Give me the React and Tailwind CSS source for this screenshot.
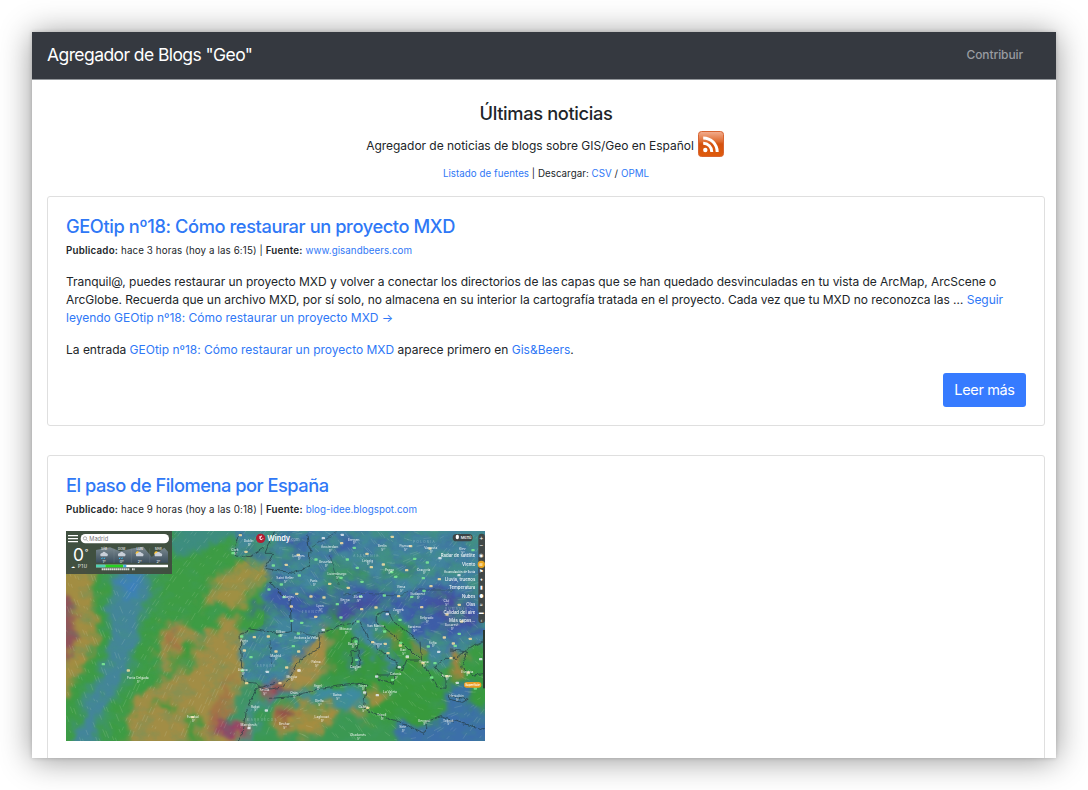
import React from "react";

const link = "text-[#2f78f6]";

// Map geometry uses a 3x grid: viewBox is 1257 x 630 for a 419 x 210 picture.
const yellowMarks = [
  [541, 31], [558, 81], [583, 337], [625, 335], [553, 377], [205, 437], [560, 475], [398, 577], [997, 36], [845, 55], [921, 87], [934, 127], [809, 177], [865, 189], [1052, 64], [1110, 71], [1040, 136], [970, 119], [1113, 184], [1138, 163], [1085, 247], [710, 207], [753, 215], [792, 218], [694, 245], [767, 276], [716, 380], [648, 380], [680, 428], [717, 437], [905, 253], [948, 248], [938, 352], [984, 385], [976, 357], [1021, 362], [1042, 397], [1089, 415], [1153, 338], [1173, 400], [1225, 443], [1161, 454], [679, 120], [923, 549], [1180, 356], [1231, 342], [1198, 240], [1205, 290], [715, 90], [1161, 269], [660, 475], [1016, 214],
];
const greenMarks = [
  [130, 418], [519, 85], [545, 335], [547, 437], [573, 397], [627, 194], [640, 122], [883, 69], [862, 104], [892, 129], [843, 159], [906, 171], [768, 104], [995, 142], [1007, 156], [1064, 102], [1102, 113], [1090, 160], [718, 152], [664, 179], [695, 288], [725, 294], [832, 238], [902, 215], [973, 212], [1055, 216], [1092, 198], [843, 278], [894, 290], [974, 320], [715, 326], [700, 364], [888, 350], [890, 405], [998, 465], [1115, 458], [1022, 354], [1105, 365], [1125, 415], [1186, 363], [1020, 285], [1198, 327], [660, 332], [1239, 76], [1246, 491], [672, 217],
];
const whiteMarks = [
  [622, 441], [619, 557], [567, 610], [847, 30], [1140, 100], [1197, 151], [950, 455], [1192, 474], [914, 503], [952, 511], [1136, 381], [982, 268], [717, 437], [1018, 427], [790, 315], [1262, 403], [790, 40], [1042, 395],
];
const cities = [
  [525, 78, "Cork"], [566, 52, "Dublín"], [233, 463, "Ponta Delgada"], [398, 580, "Funchal"], [552, 350, "Porto"], [586, 548, "Rabat"], [566, 602, "Marrakech"], [548, 438, "Lisboa"], [613, 499, "Sevilla"], [881, 47, "Bremen"], [809, 69, "Ámsterdam"], [716, 95, "Londres"], [797, 115, "Bruselas"], [831, 150, "Luxemburgo"], [675, 162, "Saint Helier"], [967, 66, "Berlín"], [923, 110, "Leipzig"], [988, 137, "Praga"], [1035, 66, "Poznan"], [1112, 73, "Varsovia"], [1091, 137, "Cracovia"], [1023, 190, "Viena"], [1073, 210, "Budapest"], [895, 220, "Zürich"], [855, 227, "Berna"], [686, 218, "Nantes"], [780, 247, "Lyon"], [761, 171, "París"], [738, 343, "Andorra la Vella"], [662, 325, "Bilbao"], [857, 315, "Mónaco"], [947, 307, "San Marino"], [1015, 257, "Zagreb"], [1100, 283, "Belgrado"], [1063, 310, "Sarajevo"], [953, 359, "Roma"], [1118, 356, "Sofía"], [768, 415, "Palma"], [887, 428, "Cagliari"], [878, 359, "Bastia"], [1030, 378, "Bari"], [1091, 415, "Tirana"], [1007, 450, "Catania"], [1222, 443, "Esmirna"], [1190, 516, "Heraclión"], [1160, 455, "Atenas"], [695, 458, "Murcia"], [773, 485, "Argel"], [702, 508, "Orán"], [832, 513, "Batna"], [908, 485, "Túnez"], [990, 503, "La Valeta"], [778, 532, "Djelfa"], [785, 580, "Laghouat"], [673, 600, "Bechar"], [910, 550, "Gabès"], [965, 573, "Trípoli"], [1028, 610, "Sirte"], [1093, 590, "Bengasi"], [1165, 590, "Tobruk"], [894, 634, "Ghadamés"], [1207, 75, "Kiev"], [1159, 232, "Cluj"], [1175, 303, "Bucarest"], [647, 395, "Madrid"],
];
const layers = [
  [97, "Radar de satélite", "◉"], [123, "Viento", "≋"], [145, "Acumulación de lluvia", "⚑"], [167, "Lluvia, truenos", "♦"], [193, "Temperatura", "▮"], [219, "Nubes", "●"], [242, "Olas", "≈"], [266, "Calidad del aire", "▬"], [291, "Más capas...", "‹"],
];

// Short wind streaks, spread with a deterministic sequence.
const streaks = Array.from({ length: 1100 }, (_, i) => {
  const x = 18 + ((i * 0.6180339) % 1) * 1250;
  const y = 18 + ((i * 0.7548776) % 1) * 625;
  const a = x < 180 ? 1.2 : x < 640 ? -0.9 - y / 2200 : Math.sin(x / 120 + y / 90);
  const l = 8 + (i % 5) * 4;
  return `M${x.toFixed(0)} ${y.toFixed(0)}l${(Math.cos(a) * l).toFixed(0)} ${(Math.sin(a) * l).toFixed(0)}`;
}).join("");

function Marks({ points, fill }) {
  return points.map(([x, y], i) => (
    <rect key={i} x={x - 5} y={y - 4} width="10" height="7" rx="2" fill={fill} />
  ));
}

function WindMap() {
  return (
    <svg viewBox="18 18 1257 630" preserveAspectRatio="none" className="block h-[210px] w-[419px]" fontFamily="Inter, sans-serif">
      <defs>
        <filter id="rough" x="-10%" y="-10%" width="120%" height="120%" colorInterpolationFilters="sRGB">
          <feTurbulence type="fractalNoise" baseFrequency="0.022" numOctaves="5" seed="8" result="n" />
          <feGaussianBlur in="SourceGraphic" stdDeviation="9" result="soft" />
          <feDisplacementMap in="soft" in2="n" scale="75" xChannelSelector="R" yChannelSelector="G" />
          <feGaussianBlur stdDeviation="2.5" />
        </filter>
        <filter id="coast" x="-5%" y="-5%" width="110%" height="110%" colorInterpolationFilters="sRGB">
          <feTurbulence type="fractalNoise" baseFrequency="0.06" numOctaves="2" seed="3" result="n" />
          <feDisplacementMap in="SourceGraphic" in2="n" scale="14" xChannelSelector="R" yChannelSelector="G" />
        </filter>
        <filter id="mottle" x="0" y="0" width="100%" height="100%" colorInterpolationFilters="sRGB">
          <feTurbulence type="fractalNoise" baseFrequency="0.02 0.026" numOctaves="4" seed="15" />
          <feColorMatrix values="0 0 0 0 .24  0 0 0 0 .38  0 0 0 0 .66  2.8 0 0 0 -1.15" />
        </filter>
        <filter id="mottleGreen" x="0" y="0" width="100%" height="100%" colorInterpolationFilters="sRGB">
          <feTurbulence type="fractalNoise" baseFrequency="0.018 0.025" numOctaves="4" seed="23" />
          <feColorMatrix values="0 0 0 0 .26  0 0 0 0 .6  0 0 0 0 .45  2.6 0 0 0 -1.1" />
        </filter>
        <linearGradient id="sky" x1="0" y1="0" x2="0" y2="1">
          <stop offset="0" stopColor="#7d8b91" />
          <stop offset="1" stopColor="#3c4f5e" />
        </linearGradient>
        <clipPath id="frame"><rect x="18" y="18" width="1257" height="630" /></clipPath>
        <clipPath id="land">
          <path d="M525 18H1275V350L1190 375 1150 430 1070 350 1010 270 950 265 960 330 1020 400 1000 450 880 300 780 325 700 450 620 490 555 470 545 330 610 300 620 160 530 90Z" />
        </clipPath>
      </defs>
      <g clipPath="url(#frame)">
        <rect x="18" y="18" width="1257" height="630" fill="#3d9c44" />
        <g filter="url(#rough)">
          <path d="M-60 130H92Q115 240 98 350Q82 450-20 540H-60Z" fill="#a28d42" />
          <path d="M-60 200H10Q75 300 35 350Q50 410-60 430Z" fill="#91545a" />
          <path d="M145 120H300Q275 225 255 320Q240 410 195 480Q135 555 120 690H30Q40 545 100 465Q145 390 140 300Z" fill="#3f9468" />
          <path d="M165 120H285Q255 225 235 320Q220 410 175 470Q115 535 100 690H45Q60 545 120 465Q165 390 155 300Q145 220 165 120Z" fill="#43859a" />
          <path d="M185 145H255L215 225 185 200Z" fill="#3d80bd" />
          <path d="M330-40H530V20L440 65 350 100Z" fill="#3d8c80" />
          <path d="M625 50Q590 100 540 125Q490 130 450 190Q410 240 425 250Q480 230 530 265L600 180 640 120Z" fill="#9f9043" />
          <path d="M370 290Q300 300 290 350Q280 400 300 440Q390 400 430 370Q410 310 370 290ZM540 270Q450 290 430 340L410 400 300 470Q220 500 205 560Q190 610 215 700H530L590 510 550 470 540 350Z" fill="#a28d45" />
          <path d="M325 315Q360 310 365 370L325 375ZM520 450Q470 500 440 600L460 660 500 560Z" fill="#a37645" />
          <path d="M420 360Q360 365 325 410Q380 405 410 385ZM388 570H410V670H382ZM260 540L350 530 340 565ZM470 240L560 248 500 275Z" fill="#379a3b" />
          <path d="M500 570Q460 580 480 640H545L550 590 520 610Z" fill="#9a396a" />
          <path d="M525-40H1330V355L1220 370 1190 400 1130 430 1080 350 990 270 940 270 970 340 1020 410 980 450 870 290 790 325 740 370 690 450 620 495 550 475 540 330 625 305 610 220 630 120 525 95Z" fill="#42869d" />
          <path d="M630 90L560 105 545 70 590 18H640Z" fill="#428c79" />
          <path d="M560 260L670 185 745 200 830 190 960 190 1050 205 1130 170 1200 185 1270 240V325L1100 350 1030 270 920 225 835 285 720 280 650 255Z" fill="#3e5da7" />
          <path d="M870 225L970 220 930 260 845 300 790 300 820 245ZM1130 185L1220 220 1250 290 1170 300 1115 250Z" fill="#464f9f" />
          <path d="M670 30L750 25 725 90 690 110ZM790 90L850 20 900 50 810 110ZM680 165L620 210 640 130Z" fill="#3e61a8" />
          <path d="M780 115L910 125 930 170 800 190ZM970 130L1060 125 1080 155 980 165ZM630 75L680 95 640 115ZM540 490L600 480 560 580 490 620Z" fill="#3e9466" />
          <path d="M820 230L795 340 735 375 700 440 880 480 980 465 970 410 900 330 850 320Z" fill="#38973e" />
          <path d="M950 270Q1000 280 1030 320L1075 350 1095 430 1130 470 1240 420 1300 350V550L1150 520 1110 610 970 590 870 500 980 445 1040 400 970 350Z" fill="#38993c" />
          <path d="M796 310Q825 370 800 420Q795 480 720 495L640 525 620 490 700 445 715 395Z" fill="#a68c46" />
          <path d="M550 600L630 480 700 490 670 525 600 515Z" fill="#a75359" />
          <path d="M580 530L690 500 900 480 915 570 850 680H540Z" fill="#3e8ba0" />
          <path d="M600 540L700 520 790 530 850 560 930 590 1050 600 1090 680H550Z" fill="#3b9852" />
          <path d="M635 575Q690 515 785 525L725 580 690 590 820 535 830 585 760 640 640 615ZM860 565L920 545 935 585ZM915 495L975 500 970 535 915 535Z" fill="#a58d40" />
          <path d="M650 580L700 545 710 572 660 588ZM640 480L690 488 650 520Z" fill="#8f3d4c" />
          <path d="M1175 380L1218 375 1208 455 1175 465ZM1068 360L1086 365 1090 410 1068 395ZM970 315L1020 350 1000 365Z" fill="#a6823f" />
          <path d="M1000 590L1110 610 1180 520 1310 560V690H1040ZM1165 482L1245 478 1228 528 1160 533ZM865 375L895 365 905 425 880 440Z" fill="#3c6fa9" />
        </g>
        <g clipPath="url(#land)">
          <rect x="525" y="18" width="750" height="630" filter="url(#mottle)" opacity=".42" />
          <rect x="525" y="18" width="750" height="630" filter="url(#mottleGreen)" opacity=".45" />
        </g>
        <rect x="18" y="18" width="1257" height="630" filter="url(#mottleGreen)" opacity=".25" />
        <path d={streaks} stroke="#e7efd8" strokeWidth="1.8" opacity=".22" fill="none" />
        <g fill="none" stroke="#233b43" strokeWidth="3" opacity=".7" filter="url(#coast)">
          <path d="M540 25L525 60 530 90 570 95 612 68M640 20L615 85 640 85 615 130 700 145 745 125 750 80 740 30M625 165L660 205 690 225 695 320 655 325 570 312 540 325 545 430 550 470 590 475 610 495 670 485 700 440 718 405 775 370 780 325 850 300 900 290 925 345 990 400 1015 410 1005 430 1028 435 1040 405 1080 405 1015 340 948 290 950 270 982 255 1000 290 1080 350 1085 410 1110 450 1130 485 1155 490 1155 460 1125 425 1155 400 1190 400 1225 370 1275 345M645 475L590 490 555 560 550 620 535 648M630 520L700 515 780 490 900 475 920 480 910 545 940 565 1015 590 1095 625 1100 590 1140 575 1275 615" />
          <path d="M875 340L895 340 892 370 880 360ZM873 378L897 375 900 425 875 425ZM950 450L1008 450 1000 478 955 463ZM1165 512L1225 522 1208 532 1168 523ZM1170 375L1220 380 1205 430 1240 450 1275 445" />
          <path strokeWidth="1.8" d="M750 70L790 45 830 20M630 345L635 430M700 320L775 335M850 210L910 205 1015 210 1080 195 1180 195M810 90L835 180" />
        </g>
        <g opacity=".82" filter="blur(.5px)">
          <Marks points={yellowMarks} fill="#ffe3a1" />
          <Marks points={greenMarks} fill="#7ff096" />
          <Marks points={whiteMarks} fill="#e7edf5" />
        </g>
        <g fill="#fff" fontSize="9.5" textAnchor="middle" fontWeight="500" opacity=".8">
          {cities.map(([x, y, name]) => (
            <g key={name}>
              <text x={x} y={y}>{name}</text>
              <text x={x + 2} y={y + 11}>5°</text>
            </g>
          ))}
        </g>
        <g fill="#d2e4ee" fontSize="9" opacity=".4" letterSpacing="4">
          <text x="880" y="95">ALEMANIA</text><text x="1060" y="53">POLONIA</text><text x="725" y="264">FRANCIA</text><text x="1155" y="254">RUMANIA</text><text x="560" y="588">MARRUECOS</text><text x="590" y="426">ESPAÑA</text>
        </g>
        <rect x="18" y="18" width="318" height="129" fill="#414b40" opacity=".94" />
        <path d="M24 32H54M24 41H54M24 50H54" stroke="#fff" strokeWidth="4" />
        <rect x="62" y="27" width="265" height="28" rx="14" fill="#fff" />
        <circle cx="75" cy="40" r="5" fill="none" stroke="#888" strokeWidth="2" />
        <path d="M79 44L84 49" stroke="#888" strokeWidth="2" />
        <text x="88" y="47" fontSize="17" fill="#777">Madrid</text>
        <text x="39" y="108" fontSize="52" fill="#fff">0</text>
        <text x="74" y="89" fontSize="24" fill="#fff">°</text>
        <text x="34" y="129" fontSize="13" fill="#fff" letterSpacing="2">☁ P1U</text>
        <path d="M108 75L150 67 180 79 220 70 250 65 275 96 300 78 313 68 324 80V113H108Z" fill="url(#sky)" />
        <path d="M162 70V114M214 70V114M269 70V114" stroke="#a0aaac" strokeWidth="1" opacity=".5" />
        {[132, 185, 239, 295].map((x, i) => (
          <g key={x}>
            {i > 1 && <circle cx={x - 6} cy="85" r="6" fill="#ffc73a" />}
            <path d={`M${x - 10} 94q-4-9 5-10q4-8 11 0q9 2 4 10Z`} fill="#c9d0d9" />
            {i < 2 && <path d={`M${x - 5} 98l-2 4m9-4l-2 4`} stroke="#36c6ff" strokeWidth="3" />}
            <text x={x} y="75" fontSize="9" textAnchor="middle" fill="#fff">{["SÁB", "DOM", "LUN", "MAR"][i]}</text>
            <text x={x} y="113" fontSize="11" textAnchor="middle" fill="#fff">{["1°", "0°", "2°", "2°"][i]}</text>
          </g>
        ))}
        <path d="M108 123H324" stroke="#fff" strokeWidth="8" />
        <path d="M108 123H136" stroke="#50d2b2" strokeWidth="8" />
        <path d="M136 123H190" stroke="#27d023" strokeWidth="8" />
        <path d="M190 123H199" stroke="#42a8d8" strokeWidth="8" />
        <path d="M125 133H208M216 133H224" stroke="#d7dbd6" strokeWidth="6" strokeDasharray="5 1" />
        <circle cx="602" cy="40" r="14" fill="#b31e32" />
        <path d="M600 33v9q6 5 9-2M600 37q5 0 4-5" stroke="#fff" strokeWidth="3" fill="none" />
        <text x="622" y="48" fontSize="22" fontWeight="600" fill="#fff">Windy<tspan fontSize="12" fontWeight="400" opacity=".5">.com</tspan></text>
        <rect x="1178" y="27" width="60" height="22" rx="11" fill="#3d4446" />
        <ellipse cx="1192" cy="36" rx="5" ry="7" fill="#fff" />
        <text x="1202" y="42" fontSize="12" fontWeight="500" fill="#fff">Menú</text>
        <rect x="1255" y="26" width="20" height="268" rx="10" fill="#414848" />
        <text x="1264" y="44" textAnchor="middle" fontSize="19" fill="#fff">+</text>
        <text x="1264" y="67" textAnchor="middle" fontSize="19" fill="#fff">−</text>
        <circle cx="1264" cy="118" r="11" fill="#e9a521" />
        {layers.map(([y, name, icon]) => (
          <g key={name} fill="#fff">
            <text x="1246" y={y} textAnchor="end" fontSize={name.startsWith("Acu") ? 9 : 13} fontWeight="500" opacity=".92">{name}</text>
            <text x="1264" y={y} textAnchor="middle" fontSize="14">{icon}</text>
          </g>
        ))}
        <rect x="1269" y="315" width="6" height="175" fill="#2b3a31" />
        <rect x="1212" y="471" width="52" height="17" rx="8" fill="#e99d22" />
        <text x="1238" y="484" fontSize="9" fontWeight="600" textAnchor="middle" fill="#fff">Superficie</text>
      </g>
    </svg>
  );
}

function RssIcon() {
  return (
    <svg viewBox="0 0 26 26" className="h-[26px] w-[26px]" role="img" aria-label="RSS">
      <defs>
        <linearGradient id="rss" x1="0" y1="0" x2="0" y2="1">
          <stop stopColor="#f2ae91" /><stop offset=".4" stopColor="#df6c30" /><stop offset=".5" stopColor="#d4520f" /><stop offset="1" stopColor="#df5b0b" />
        </linearGradient>
      </defs>
      <rect x=".5" y=".5" width="25" height="25" rx="3" fill="url(#rss)" stroke="#d86532" />
      <circle cx="7.3" cy="19" r="2.2" fill="#fff" />
      <path d="M5.2 12.2A8.6 8.6 0 0 1 13.8 21M5.2 6.9A14 14 0 0 1 19.2 21" fill="none" stroke="#fff" strokeWidth="3" />
    </svg>
  );
}

function EntryHeader({ title, titleClass, time, source }) {
  return (
    <header>
      <h2 className={`text-[18.25px] leading-6 font-medium whitespace-nowrap ${titleClass} ${link}`}>{title}</h2>
      <p className="mt-[5px] text-[9.75px] leading-4 tracking-[0.12px] whitespace-nowrap">
        <b className="font-semibold tracking-[0.22px]">Publicado:</b> {time} | <b className="font-semibold tracking-[0.22px]">Fuente:</b> <a className={`${link} tracking-[0.05px]`}>{source}</a>
      </p>
    </header>
  );
}

export default function App() {
  return (
    <div className="h-[790px] w-[1088px] overflow-hidden bg-white p-8 font-['Inter',sans-serif] text-[#212529]">
      <div className="flex h-[726px] w-[1024px] flex-col overflow-hidden bg-white shadow-[0_0_4px_rgba(0,0,0,0.18),0_2px_30px_rgba(0,0,0,0.42)]">
        <nav className="flex h-12 shrink-0 items-center justify-between border-b border-[#92969a] bg-[#353940] pr-[33px] pb-px pl-[15px]">
          <span className="text-[17.5px] tracking-[-0.58px] text-white">Agregador de Blogs "Geo"</span>
          <a className="text-[12px] font-medium tracking-[-0.1px] text-[#999ca0]">Contribuir</a>
        </nav>
        <main className="flex flex-col pr-[11px] pl-[15px]">
          <section className="flex h-[116px] flex-col items-center pt-[21px]">
            <h1 className="text-[18.25px] leading-6 font-medium tracking-[-0.36px]">Últimas noticias</h1>
            <div className="mt-[6px] mr-[2px] flex h-[26px] items-center gap-1">
              <p className="pt-[3px] text-[12px] tracking-[-0.035px]">Agregador de noticias de blogs sobre GIS/Geo en Español</p>
              <RssIcon />
            </div>
            <p className="mt-[9px] text-[9.75px] leading-4 tracking-[0.04px]">
              <a className={link}>Listado de fuentes</a> | Descargar: <a className={link}>CSV</a> / <a className={link}>OPML</a>
            </p>
          </section>
          <article className="flex h-[230px] shrink-0 flex-col rounded-[3px] border border-[#dfdfdf] px-[18px] pt-[17px]">
            <EntryHeader title="GEOtip nº18: Cómo restaurar un proyecto MXD" titleClass="tracking-[-0.41px]" time="hace 3 horas (hoy a las 6:15)" source="www.gisandbeers.com" />
            <div className="mt-[14px] text-[12px] leading-[18px] tracking-[-0.04px] whitespace-nowrap">
              <p>
                Tranquil@, puedes restaurar un proyecto MXD y volver a conectar los directorios de las capas que se han quedado desvinculadas en tu vista de ArcMap, ArcScene o<br />
                ArcGlobe. Recuerda que un archivo MXD, por sí solo, no almacena en su interior la cartografía tratada en el proyecto. Cada vez que tu MXD no reconozca las … <a className={link}>Seguir<br /><span className="tracking-[-0.01px]">leyendo GEOtip nº18: Cómo restaurar un proyecto MXD →</span></a>
              </p>
              <p className="mt-[14px] tracking-[-0.005px]">La entrada <a className={link}>GEOtip nº18: Cómo restaurar un proyecto MXD</a> aparece primero en <a className={link}>Gis&amp;Beers</a>.</p>
            </div>
            <button className="mt-[14px] flex h-[34px] w-[83px] items-center justify-center self-end rounded-[3px] bg-[#367bff] text-[14.5px] tracking-[-0.35px] text-white">Leer más</button>
          </article>
          <article className="mt-[29px] flex h-[400px] shrink-0 flex-col rounded-[3px] border border-[#dfdfdf] px-[18px] pt-[17px]">
            <EntryHeader title="El paso de Filomena por España" titleClass="tracking-[-0.49px]" time="hace 9 horas (hoy a las 0:18)" source="blog-idee.blogspot.com" />
            <div className="mt-[13px]"><WindMap /></div>
          </article>
        </main>
      </div>
    </div>
  );
}
